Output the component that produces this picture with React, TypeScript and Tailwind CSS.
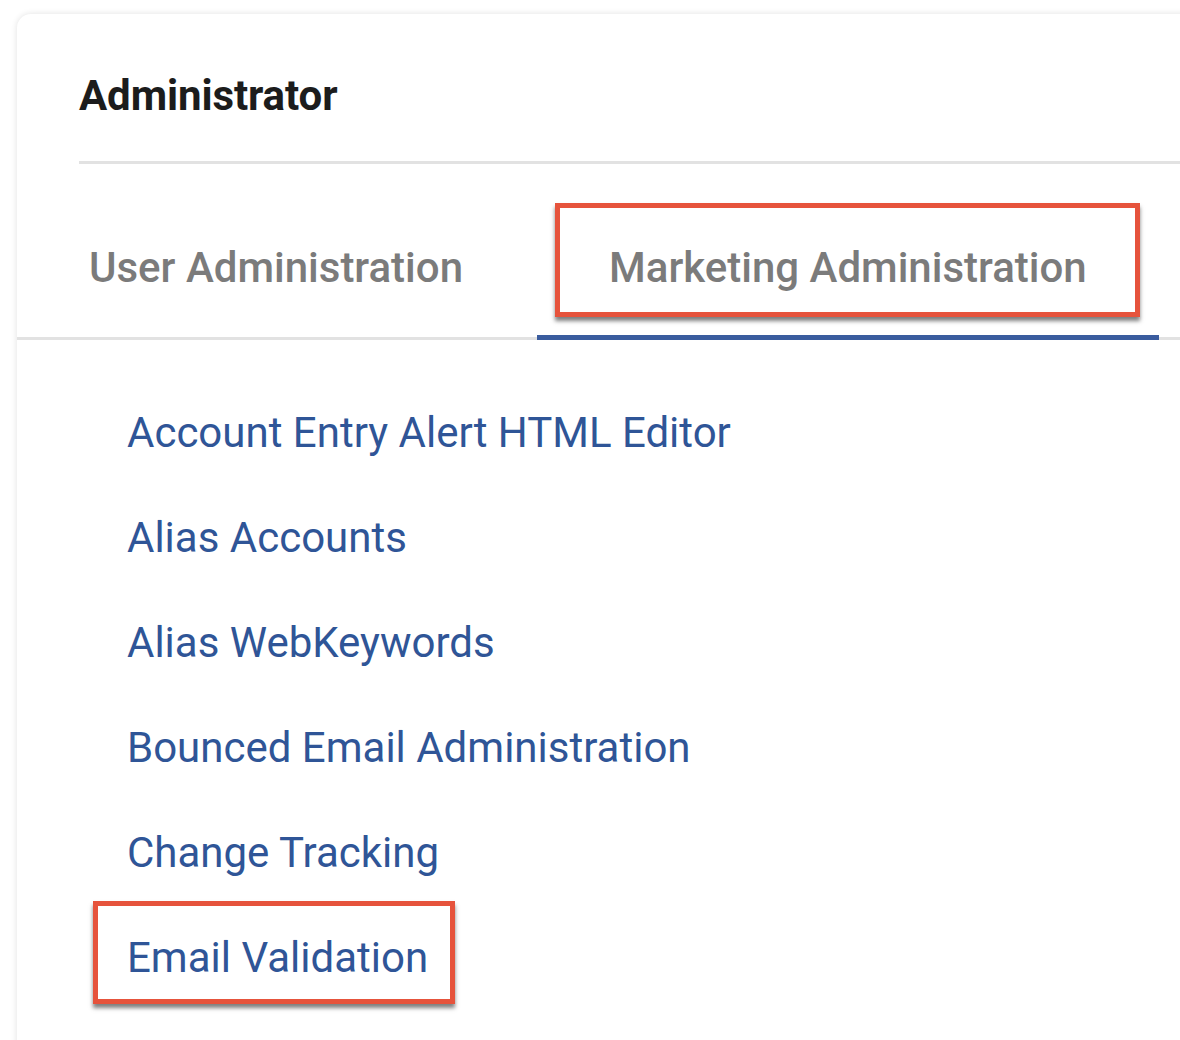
import { useState } from "react";

const links = [
    "Account Entry Alert HTML Editor",
    "Alias Accounts",
    "Alias WebKeywords",
    "Bounced Email Administration",
    "Change Tracking",
    "Email Validation",
];

export default function App() {
    const [activeTab, setActiveTab] = useState<"user" | "marketing">("marketing");

    return (
        <div
            className="w-[1180px] h-[1040px] overflow-hidden bg-white"
            style={{ fontFamily: "Roboto, 'Liberation Sans', sans-serif" }}
        >
            <div className="ml-[17px] mt-[14px] w-[1220px] h-[1100px] bg-white rounded-tl-[14px] shadow-[0_0_6px_rgba(0,0,0,0.12)]">
                <div className="pl-[62px] pt-[62px]">
                    <h1 className="text-[42px] leading-[40px] font-bold text-[#1c1c1c] tracking-[-0.1px]">Administrator</h1>
                    <div className="mt-[45px] h-[3px] bg-[#e2e2e2]" />
                </div>

                <div className="flex gap-[2px] pt-[80px] border-b-[3px] border-[#e2e2e2]">
                    <TabButton label="User Administration" active={activeTab === "user"} onClick={() => setActiveTab("user")} />
                    <div className="relative">
                        <TabButton
                            label="Marketing Administration"
                            active={activeTab === "marketing"}
                            onClick={() => setActiveTab("marketing")}
                        />
                        <Highlight className="left-[18px] -top-[41px] w-[585px] h-[114px]" />
                    </div>
                </div>

                <div className="flex flex-col items-start gap-[57px] pl-[110px] pt-[69px]">
                    {links.map((label) => (
                        <div key={label} className="relative">
                            <a href="#" className="block text-[42px] leading-[48px] text-[#2f5597]">
                                {label}
                            </a>
                            {label === "Email Validation" && (
                                <Highlight className="-left-[34px] -top-[33px] w-[362px] h-[103px]" />
                            )}
                        </div>
                    ))}
                </div>
            </div>
        </div>
    );
}

function TabButton({ label, active, onClick }: { label: string; active: boolean; onClick: () => void }) {
    return (
        <button
            onClick={onClick}
            className={`px-[72px] pb-[43px] text-[42px] leading-[48px] font-medium text-[#7b7b7b] border-b-[5px] -mb-[3px] ${
                active ? "border-[#3a5c9e]" : "border-transparent"
            }`}
        >
            {label}
        </button>
    );
}

function Highlight({ className }: { className: string }) {
    return (
        <span
            className={`absolute pointer-events-none border-[5px] border-[#e6533c] shadow-[0_4px_4px_rgba(0,0,0,0.5)] ${className}`}
        />
    );
}
